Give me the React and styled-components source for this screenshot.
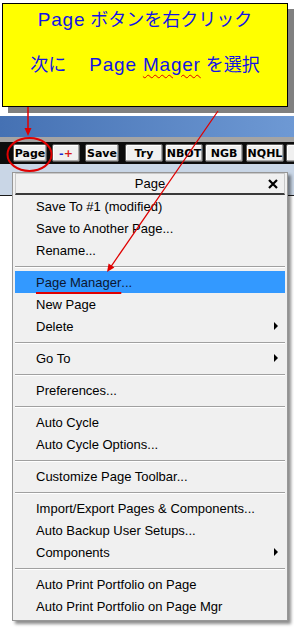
import React from 'react';
import styled, { createGlobalStyle } from 'styled-components';

const Global = createGlobalStyle`
  html, body { margin: 0; padding: 0; background: #fff; }
  body { width: 294px; height: 628px; overflow: hidden; font-family: "Liberation Sans", Arial, sans-serif; }
`;

const Page = styled.div`
  position: relative;
  width: 294px;
  height: 628px;
  overflow: hidden;
  background: #fff;
`;

const CalloutArea = styled.div`
  height: 116px;
  box-sizing: border-box;
  padding: 3px 0 0 2px;
`;

const Callout = styled.div`
  width: 286px;
  height: 104px;
  box-sizing: border-box;
  background: #ffff00;
  border: 1px solid #000;
  box-shadow: 6px 6px 0 #808080;
  padding-top: 4px;
  text-align: center;
  font-family: "Liberation Sans", "Noto Sans CJK JP", sans-serif;
  font-size: 18px;
  color: #1414e6;
`;

const CalloutLine = styled.div`
  line-height: 24px;
  margin-top: ${p => p.$gap || 0}px;
  white-space: pre;
`;

const Latin = styled.span`
  font-size: 19px;
  letter-spacing: 0.8px;
`;

const Misspelled = styled.span`
  text-decoration: underline wavy #e00000;
  text-decoration-thickness: 1px;
  text-underline-offset: 3px;
`;

const BlueBar = styled.div`
  height: 21px;
  background: linear-gradient(to right, #4571b3, #6e99d4);
`;

const Toolbar = styled.div`
  height: 22px;
  border-top: 5px solid #a4a4a4;
  background: #0c0c0c;
  display: flex;
  align-items: center;
  padding-left: 13px;
  overflow: hidden;
`;

const ToolButton = styled.div`
  flex: none;
  width: ${p => p.$w}px;
  margin-left: ${p => p.$ml || 0}px;
  height: 18px;
  box-sizing: border-box;
  background: #f0f0f0;
  border: 1px solid #5a5a5a;
  border-radius: 2px;
  box-shadow: inset -1px -1px 0 #a8a8a8, inset 1px 1px 0 #ffffff;
  display: flex;
  align-items: center;
  justify-content: center;
  font: bold 11px "DejaVu Sans", sans-serif;
  color: #000;
`;

const Minus = styled.span` color: #1a2ad8; `;
const Plus = styled.span` color: #d81a1a; `;

const Workspace = styled.div`
  height: 464px;
  box-sizing: border-box;
  padding: 8px 0 0 12px;
  background: linear-gradient(
    to bottom,
    #c9d6e6 0,
    #c9d6e6 31px,
    #1a1a1a 31px,
    #1a1a1a 32px,
    #ffffff 32px
  );
`;

const Menu = styled.div`
  width: 276px;
  box-sizing: border-box;
  background: #f0f0f0;
  border: 1px solid #979797;
  box-shadow: 3px 3px 3px rgba(0, 0, 0, 0.45);
  padding: 0 2px 3px 2px;
  font-family: "Liberation Sans", Arial, sans-serif;
  font-size: 13px;
  color: #000;
`;

const MenuTitle = styled.div`
  height: 22px;
  box-sizing: border-box;
  border: 1px solid #c8c8c8;
  border-bottom: 2px solid #3a3a3a;
  display: grid;
  grid-template-columns: 1fr auto 1fr;
  align-items: center;
`;

const TitleText = styled.span`
  grid-column: 2;
`;

const CloseBox = styled.span`
  grid-column: 3;
  justify-self: end;
  margin-right: 6px;
  display: flex;
`;

const Item = styled.div`
  height: 22px;
  display: flex;
  align-items: center;
  padding: 0 7px 0 21px;
  background: ${p => (p.$active ? '#3399ff' : 'transparent')};
  color: ${p => (p.$active ? '#0b1630' : '#000')};
  white-space: nowrap;
`;

const Marked = styled.span`
  text-decoration: underline #e00000;
  text-decoration-thickness: 2px;
  text-underline-offset: 5px;
`;

const SubArrow = styled.span`
  margin-left: auto;
  width: 0;
  height: 0;
  border-top: 4px solid transparent;
  border-bottom: 4px solid transparent;
  border-left: 4px solid #000;
`;

const Separator = styled.div`
  height: 10px;
  display: flex;
  align-items: center;
  &::after {
    content: '';
    flex: 1;
    height: 1px;
    background: #a0a0a0;
    box-shadow: 0 1px 0 #ffffff;
  }
`;

const Overlay = styled.svg`
  position: absolute;
  left: 0;
  top: 0;
  pointer-events: none;
`;

const buttons = [
  { label: 'Page', w: 34, ml: 0 },
  { label: 'minusplus', w: 28, ml: 5 },
  { label: 'Save', w: 34, ml: 5 },
  { label: 'Try', w: 38, ml: 6 },
  { label: 'NBOT', w: 38, ml: 2 },
  { label: 'NGB', w: 38, ml: 2 },
  { label: 'NQHL', w: 38, ml: 3 },
  { label: '', w: 38, ml: 2 },
];

const menu = [
  { t: 'Save To #1 (modified)' },
  { t: 'Save to Another Page...' },
  { t: 'Rename...' },
  { sep: true },
  { t: 'Page Manager...', active: true },
  { t: 'New Page' },
  { t: 'Delete', sub: true },
  { sep: true },
  { t: 'Go To', sub: true },
  { sep: true },
  { t: 'Preferences...' },
  { sep: true },
  { t: 'Auto Cycle' },
  { t: 'Auto Cycle Options...' },
  { sep: true },
  { t: 'Customize Page Toolbar...' },
  { sep: true },
  { t: 'Import/Export Pages & Components...' },
  { t: 'Auto Backup User Setups...' },
  { t: 'Components', sub: true },
  { sep: true },
  { t: 'Auto Print Portfolio on Page' },
  { t: 'Auto Print Portfolio on Page Mgr' },
];

export default function App() {
  return (
    <>
      <Global />
      <Page>
        <CalloutArea>
          <Callout>
            <CalloutLine>
              <Latin>Page</Latin> ボタンを右クリック
            </CalloutLine>
            <CalloutLine $gap={21}>
              次に　 <Latin>Page <Misspelled>Mager</Misspelled></Latin> を選択
            </CalloutLine>
          </Callout>
        </CalloutArea>
        <BlueBar />
        <Toolbar>
          {buttons.map((b, i) => (
            <ToolButton key={i} $w={b.w} $ml={b.ml}>
              {b.label === 'minusplus' ? (
                <>
                  <Minus>-</Minus>
                  <Plus>+</Plus>
                </>
              ) : (
                b.label
              )}
            </ToolButton>
          ))}
        </Toolbar>
        <Workspace>
          <Menu>
            <MenuTitle>
              <TitleText>Page</TitleText>
              <CloseBox>
                <svg width="10" height="10" viewBox="0 0 10 10">
                  <path d="M1 1 L9 9 M9 1 L1 9" stroke="#000" strokeWidth="2.2" />
                </svg>
              </CloseBox>
            </MenuTitle>
            {menu.map((m, i) =>
              m.sep ? (
                <Separator key={i} />
              ) : (
                <Item key={i} $active={m.active}>
                  {m.active ? (
                    <>
                      <Marked>Page Manager</Marked>...
                    </>
                  ) : (
                    m.t
                  )}
                  {m.sub && <SubArrow />}
                </Item>
              )
            )}
          </Menu>
        </Workspace>
        <Overlay width="294" height="628" viewBox="0 0 294 628">
          <line x1="28" y1="107" x2="28" y2="130" stroke="#e00000" strokeWidth="1.5" />
          <polygon points="24.5,128 31.5,128 28,136" fill="#e00000" />
          <ellipse cx="29.5" cy="154.5" rx="22" ry="16.5" fill="none" stroke="#e00000" strokeWidth="2" />
          <line x1="218" y1="111" x2="110" y2="268" stroke="#e00000" strokeWidth="1.3" />
          <polygon points="107,272 114.4,267.4 108.6,263.4" fill="#e00000" />
        </Overlay>
      </Page>
    </>
  );
}
